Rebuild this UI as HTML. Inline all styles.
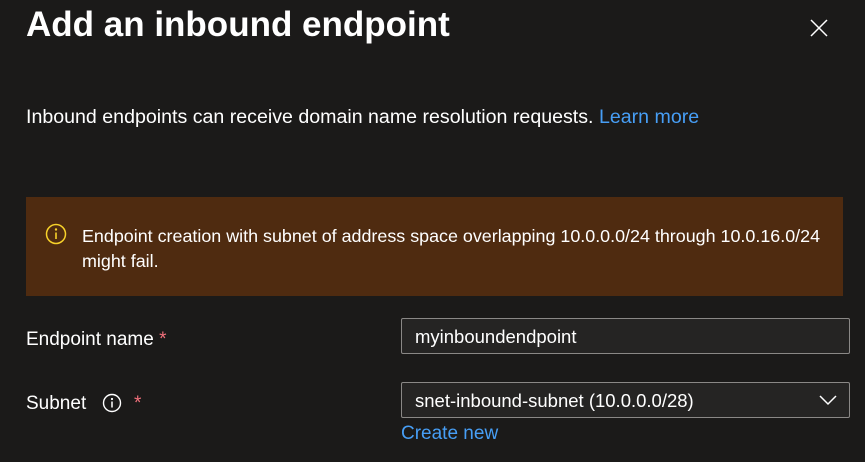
<!DOCTYPE html>
<html><head><meta charset="utf-8"><style>
body{margin:0;width:865px;height:462px;background:#1b1a19;color:#fff;font-family:"Liberation Sans",sans-serif;position:relative;overflow:hidden}
.a{position:absolute;white-space:nowrap}
.box{position:absolute;left:401px;width:449px;height:36px;border:1px solid #8a8886;border-radius:2px;background:#252423;box-sizing:border-box}
.box span{position:absolute;left:13px;top:7px;font-size:18.5px;color:#fff}
</style></head><body>
<div class="a" style="left:26px;top:5px;font-size:35px;font-weight:bold">Add an inbound endpoint</div>
<svg class="a" style="left:809px;top:18px" width="20" height="20"><path d="M2 2L18 18M18 2L2 18" stroke="#fff" stroke-width="1.5"/></svg>
<div class="a" style="left:26px;top:106px;font-size:19.6px">Inbound endpoints can receive domain name resolution requests. <span style="color:#479ef5">Learn more</span></div>
<div class="a" style="left:26px;top:197px;width:817px;height:99px;background:#4f2b10"></div>
<svg class="a" style="left:45px;top:223px" width="22" height="22"><circle cx="11" cy="11" r="9.5" fill="none" stroke="#f8d22a" stroke-width="1.5"/><circle cx="11" cy="6.5" r="1.2" fill="#f8d22a"/><path d="M11 9.5V16" stroke="#f8d22a" stroke-width="1.6"/></svg>
<div class="a" style="left:82px;top:224px;font-size:17.9px;line-height:25px">Endpoint creation with subnet of address space overlapping 10.0.0.0/24 through 10.0.16.0/24<br>might fail.</div>
<div class="a" style="left:26px;top:329px;font-size:19px">Endpoint name <span style="color:#f1707b">*</span></div>
<div class="a" style="left:26px;top:393px;font-size:19px">Subnet</div>
<svg class="a" style="left:102px;top:393px" width="20" height="20"><circle cx="10" cy="10" r="8.5" fill="none" stroke="#fff" stroke-width="1.4"/><circle cx="10" cy="6" r="1.1" fill="#fff"/><path d="M10 8.5V14.5" stroke="#fff" stroke-width="1.5"/></svg>
<div class="a" style="left:134px;top:393px;font-size:19px;color:#f1707b">*</div>
<div class="box" style="top:318px"><span>myinboundendpoint</span></div>
<div class="box" style="top:382px"><span>snet-inbound-subnet (10.0.0.0/28)</span>
<svg style="position:absolute;right:12px;top:11px" width="18" height="12"><path d="M1 2L9 10L17 2" fill="none" stroke="#fff" stroke-width="1.5"/></svg></div>
<div class="a" style="left:401px;top:423px;font-size:19px;color:#479ef5">Create new</div>
</body></html>
